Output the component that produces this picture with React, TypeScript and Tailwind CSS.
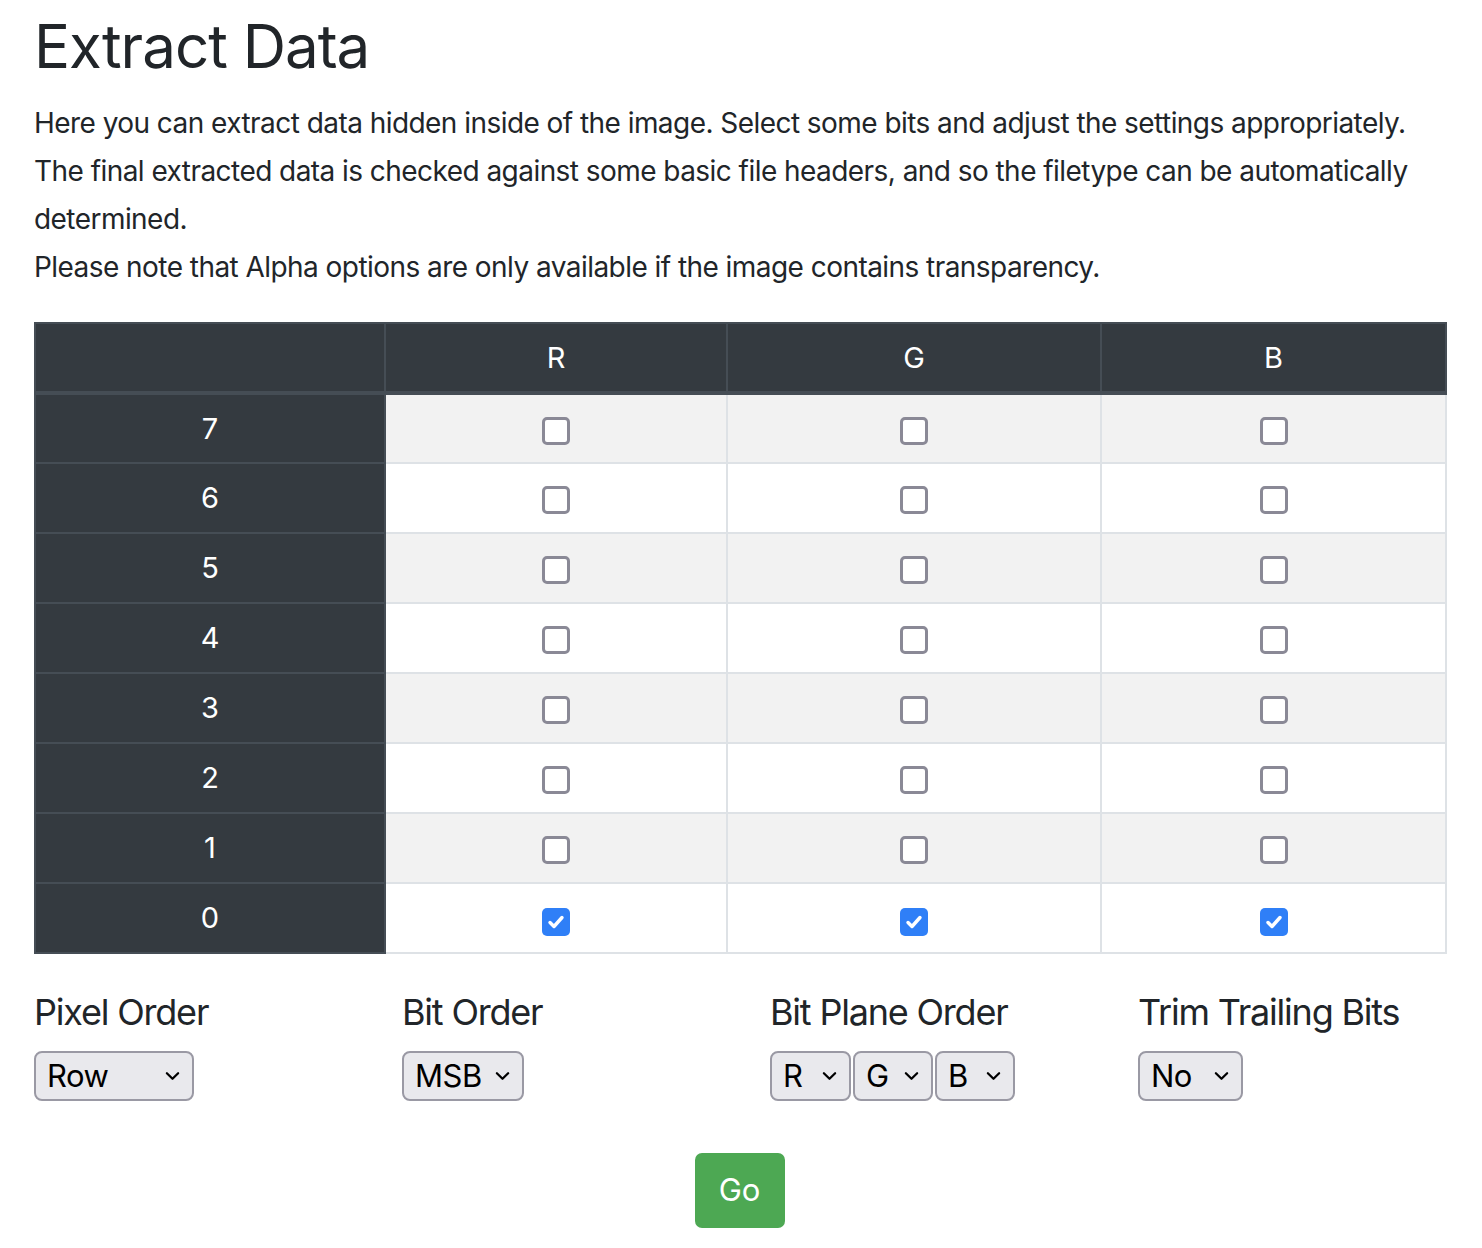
import React from 'react'

const font = { fontFamily: 'Inter, "Liberation Sans", sans-serif' }

const bits = [7, 6, 5, 4, 3, 2, 1, 0]
const channels = ['R', 'G', 'B']

function Check({ checked }: { checked: boolean }) {
  if (checked) {
    return (
      <span className="inline-flex h-[28px] w-[28px] items-center justify-center rounded-[5px] bg-[#2f7ff7]">
        <svg width="20" height="20" viewBox="0 0 20 20" fill="none">
          <path d="M4 10.5l4 4 8-9" stroke="white" strokeWidth="3.4" strokeLinecap="round" strokeLinejoin="round" />
        </svg>
      </span>
    )
  }
  return <span className="inline-block h-[28px] w-[28px] rounded-[5px] border-[3px] border-[#8a8996] bg-white" />
}

function Select({ label, width }: { label: string; width: string }) {
  return (
    <div className={`flex h-[50px] items-center justify-between rounded-[8px] border-2 border-[#9a99a4] bg-[#e9e9ed] pl-[11px] pr-[12px] text-[31px] tracking-[-0.5px] text-black ${width}`}>
      <span>{label}</span>
      <svg width="15" height="10" viewBox="0 0 16 10" fill="none">
        <path d="M2 2l6 6 6-6" stroke="black" strokeWidth="2.4" strokeLinecap="round" strokeLinejoin="round" />
      </svg>
    </div>
  )
}

export default function App() {
  return (
    <div className="min-h-[1248px] bg-white text-[#212529]" style={font}>
      <div className="w-[1411px] pl-[34px] box-content">
        <h1 className="pt-[8px] text-[60px] leading-[76px] font-normal tracking-[-1px]">Extract Data</h1>
        <div className="mt-[15px] text-[28px] leading-[48px] tracking-[-0.55px]">
          <p>
            Here you can extract data hidden inside of the image. Select some bits and adjust the settings appropriately.
            <br />
            The final extracted data is checked against some basic file headers, and so the filetype can be automatically
            <br />
            determined.
          </p>
          <p>Please note that Alpha options are only available if the image contains transparency.</p>
        </div>

        <table className="mt-[31px] w-[1411px] table-fixed border-collapse text-[29px]">
          <colgroup>
            <col className="w-[350px]" />
            <col className="w-[342px]" />
            <col className="w-[374px]" />
            <col className="w-[345px]" />
          </colgroup>
          <thead>
            <tr className="h-[70px] bg-[#343a40] text-white">
              <th className="border-2 border-b-4 border-[#454d55] font-normal"></th>
              {channels.map((c) => (
                <th key={c} className="border-2 border-b-4 border-[#454d55] font-normal">{c}</th>
              ))}
            </tr>
          </thead>
          <tbody>
            {bits.map((b, i) => (
              <tr key={b} className={`h-[70px] ${i % 2 === 0 ? 'bg-[#f2f2f2]' : 'bg-white'}`}>
                <td className="border-2 border-[#454d55] bg-[#343a40] text-center text-white">{b}</td>
                {channels.map((c) => (
                  <td key={c} className="border-2 border-[#dee2e6] text-center align-middle">
                    <span className="inline-flex pt-[16px]">
                      <Check checked={b === 0} />
                    </span>
                  </td>
                ))}
              </tr>
            ))}
          </tbody>
        </table>

        <div className="mt-[34px] grid grid-cols-[repeat(4,368px)]">
          <div>
            <h3 className="text-[36px] leading-[48px] tracking-[-1.2px]">Pixel Order</h3>
            <div className="mt-[15px] flex">
              <Select label="Row" width="w-[160px]" />
            </div>
          </div>
          <div>
            <h3 className="text-[36px] leading-[48px] tracking-[-1.2px]">Bit Order</h3>
            <div className="mt-[15px] flex">
              <Select label="MSB" width="w-[122px]" />
            </div>
          </div>
          <div>
            <h3 className="text-[36px] leading-[48px] tracking-[-1.2px]">Bit Plane Order</h3>
            <div className="mt-[15px] flex gap-[2px]">
              <Select label="R" width="w-[81px]" />
              <Select label="G" width="w-[80px]" />
              <Select label="B" width="w-[80px]" />
            </div>
          </div>
          <div>
            <h3 className="text-[36px] leading-[48px] tracking-[-1.2px]">Trim Trailing Bits</h3>
            <div className="mt-[15px] flex">
              <Select label="No" width="w-[105px]" />
            </div>
          </div>
        </div>

        <div className="mt-[52px] flex justify-center">
          <button className="h-[75px] w-[90px] rounded-[7px] bg-[#4da853] text-[31px] text-white">Go</button>
        </div>
      </div>
    </div>
  )
}
